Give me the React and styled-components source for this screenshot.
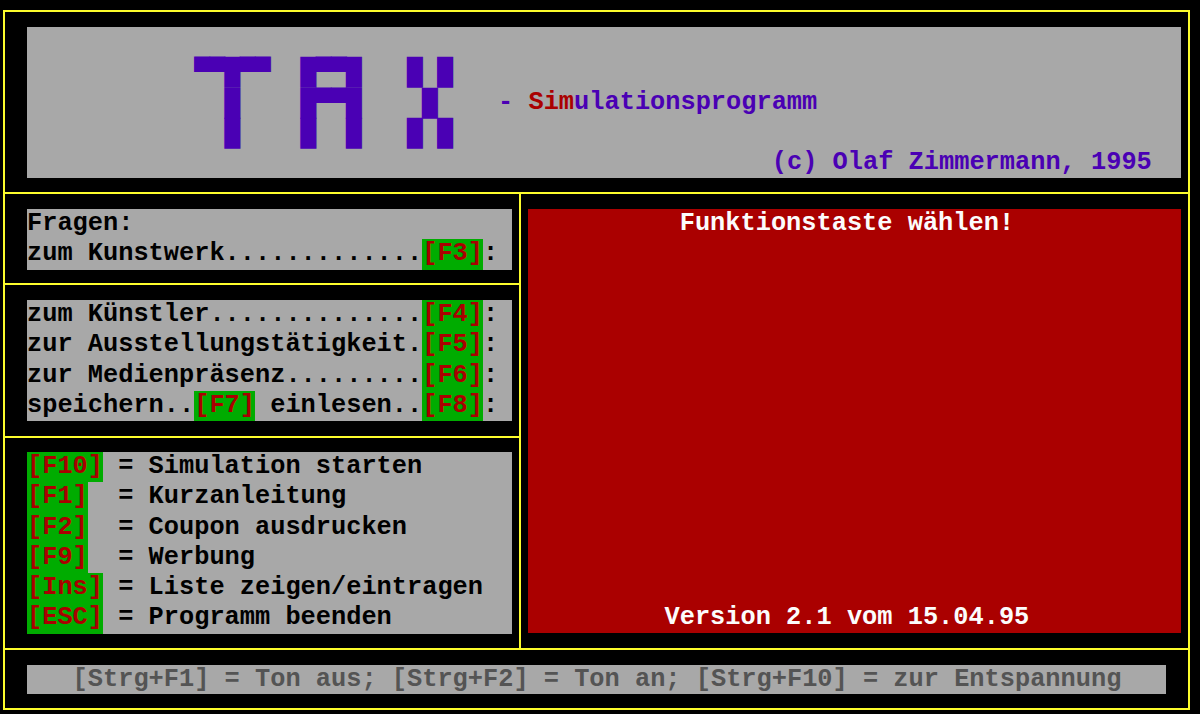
import React from 'react';
import styled, { createGlobalStyle } from 'styled-components';

const CW = 15.2;
const RH = 30.3;
const YELLOW = '#fcfc2c';
const GRAY = '#a8a8a8';
const RED = '#aa0000';
const GREEN = '#00ac00';
const VIOLET = '#4a00b4';

const Global = createGlobalStyle`
  html, body { margin: 0; padding: 0; background: #000; width: 1200px; height: 714px; overflow: hidden; }
  #root { width: 1200px; height: 714px; }
`;

const Screen = styled.div`
  width: 1200px;
  height: 714px;
  box-sizing: border-box;
  padding: 10px 0 0 3px;
  background: #000;
  font-family: "Liberation Mono", "Courier New", monospace;
  font-weight: bold;
  font-size: 25.33px;
  line-height: ${RH}px;
  color: #000;
`;

const Frame = styled.div`
  width: 1187px;
  height: 700px;
  box-sizing: border-box;
  border: 2px solid ${YELLOW};
  display: flex;
  flex-direction: column;
`;

const Band = styled.div`
  box-sizing: border-box;
  flex: none;
  height: ${(p) => p.$h}px;
  padding: ${(p) => p.$pad};
  border-bottom: ${(p) => (p.$divider ? `2px solid ${YELLOW}` : 'none')};
`;

const Middle = styled.div`
  box-sizing: border-box;
  flex: none;
  height: 456px;
  display: flex;
  border-bottom: 2px solid ${YELLOW};
`;

const LeftColumn = styled.div`
  box-sizing: border-box;
  width: 516px;
  flex: none;
  display: flex;
  flex-direction: column;
  border-right: 2px solid ${YELLOW};
`;

const RightColumn = styled.div`
  box-sizing: border-box;
  flex: 1;
  padding: 15px 7px 15px 7px;
`;

const HeaderBox = styled.div`
  height: 151px;
  background: ${GRAY};
  padding-top: ${RH}px;
  box-sizing: border-box;
`;

const TitleRow = styled.div`
  display: flex;
  align-items: flex-start;
  padding-left: ${11 * CW}px;
`;

const Logo = styled.div`
  font-family: "DejaVu Sans Mono", monospace;
  font-weight: normal;
  font-size: 26.03px;
  letter-spacing: -0.47px;
  line-height: ${RH}px;
  color: ${VIOLET};
  white-space: pre;
`;

const Subtitle = styled.div`
  margin-top: ${RH}px;
  margin-left: ${3 * CW}px;
  white-space: pre;
  color: ${VIOLET};
`;

const Accent = styled.span`
  color: ${RED};
`;

const Credit = styled.div`
  padding-left: ${49 * CW}px;
  white-space: pre;
  color: ${VIOLET};
`;

const Panel = styled.div`
  width: 485px;
  background: ${GRAY};
`;

const Line = styled.div`
  height: ${RH}px;
  white-space: pre;
  overflow: hidden;
`;

const Key = styled.span`
  display: inline-block;
  vertical-align: top;
  height: ${RH}px;
  background: ${GREEN};
  color: ${RED};
`;

const Notice = styled.div`
  height: 100%;
  box-sizing: border-box;
  background: ${RED};
  color: #fcfcfc;
  padding-right: ${CW}px;
  text-align: center;
  white-space: pre;
  display: flex;
  flex-direction: column;
  justify-content: space-between;
`;

const StatusBar = styled.div`
  height: 29px;
  line-height: 29px;
  background: ${GRAY};
  color: #545454;
  padding-left: ${3 * CW}px;
  white-space: pre;
`;

const logoRows = [
  '▀▀█▀▀  █▀▀█   █ █',
  '  █    █▀▀█    █ ',
  '  █    █  █   █ █',
];

const hotkeys = [
  ['[F10]', ' = Simulation starten'],
  ['[F1]', '  = Kurzanleitung'],
  ['[F2]', '  = Coupon ausdrucken'],
  ['[F9]', '  = Werbung'],
  ['[Ins]', ' = Liste zeigen/eintragen'],
  ['[ESC]', ' = Programm beenden'],
];

export default function App() {
  return (
    <>
      <Global />
      <Screen>
        <Frame>
          <Band $h={182} $pad="15px 7px 14px 22px" $divider>
            <HeaderBox>
              <TitleRow>
                <Logo>{logoRows.join('\n')}</Logo>
                <Subtitle>
                  - <Accent>Sim</Accent>ulationsprogramm
                </Subtitle>
              </TitleRow>
              <Credit>(c) Olaf Zimmermann, 1995</Credit>
            </HeaderBox>
          </Band>
          <Middle>
            <LeftColumn>
              <Band $h={91} $pad="15px 7px 14px 22px" $divider>
                <Panel>
                  <Line>Fragen:</Line>
                  <Line>
                    zum Kunstwerk.............<Key>[F3]</Key>:
                  </Line>
                </Panel>
              </Band>
              <Band $h={153} $pad="15px 7px 15px 22px" $divider>
                <Panel>
                  <Line>
                    zum Künstler..............<Key>[F4]</Key>:
                  </Line>
                  <Line>
                    zur Ausstellungstätigkeit.<Key>[F5]</Key>:
                  </Line>
                  <Line>
                    zur Medienpräsenz.........<Key>[F6]</Key>:
                  </Line>
                  <Line>
                    speichern..<Key>[F7]</Key> einlesen..<Key>[F8]</Key>:
                  </Line>
                </Panel>
              </Band>
              <Band $h={210} $pad="14px 7px 14px 22px">
                <Panel>
                  {hotkeys.map(([k, t]) => (
                    <Line key={k}>
                      <Key>{k}</Key>
                      {t}
                    </Line>
                  ))}
                </Panel>
              </Band>
            </LeftColumn>
            <RightColumn>
              <Notice>
                <Line>Funktionstaste wählen!</Line>
                <Line>Version 2.1 vom 15.04.95</Line>
              </Notice>
            </RightColumn>
          </Middle>
          <Band $h={58} $pad="15px 22px 14px 22px">
            <StatusBar>[Strg+F1] = Ton aus; [Strg+F2] = Ton an; [Strg+F10] = zur Entspannung</StatusBar>
          </Band>
        </Frame>
      </Screen>
    </>
  );
}
